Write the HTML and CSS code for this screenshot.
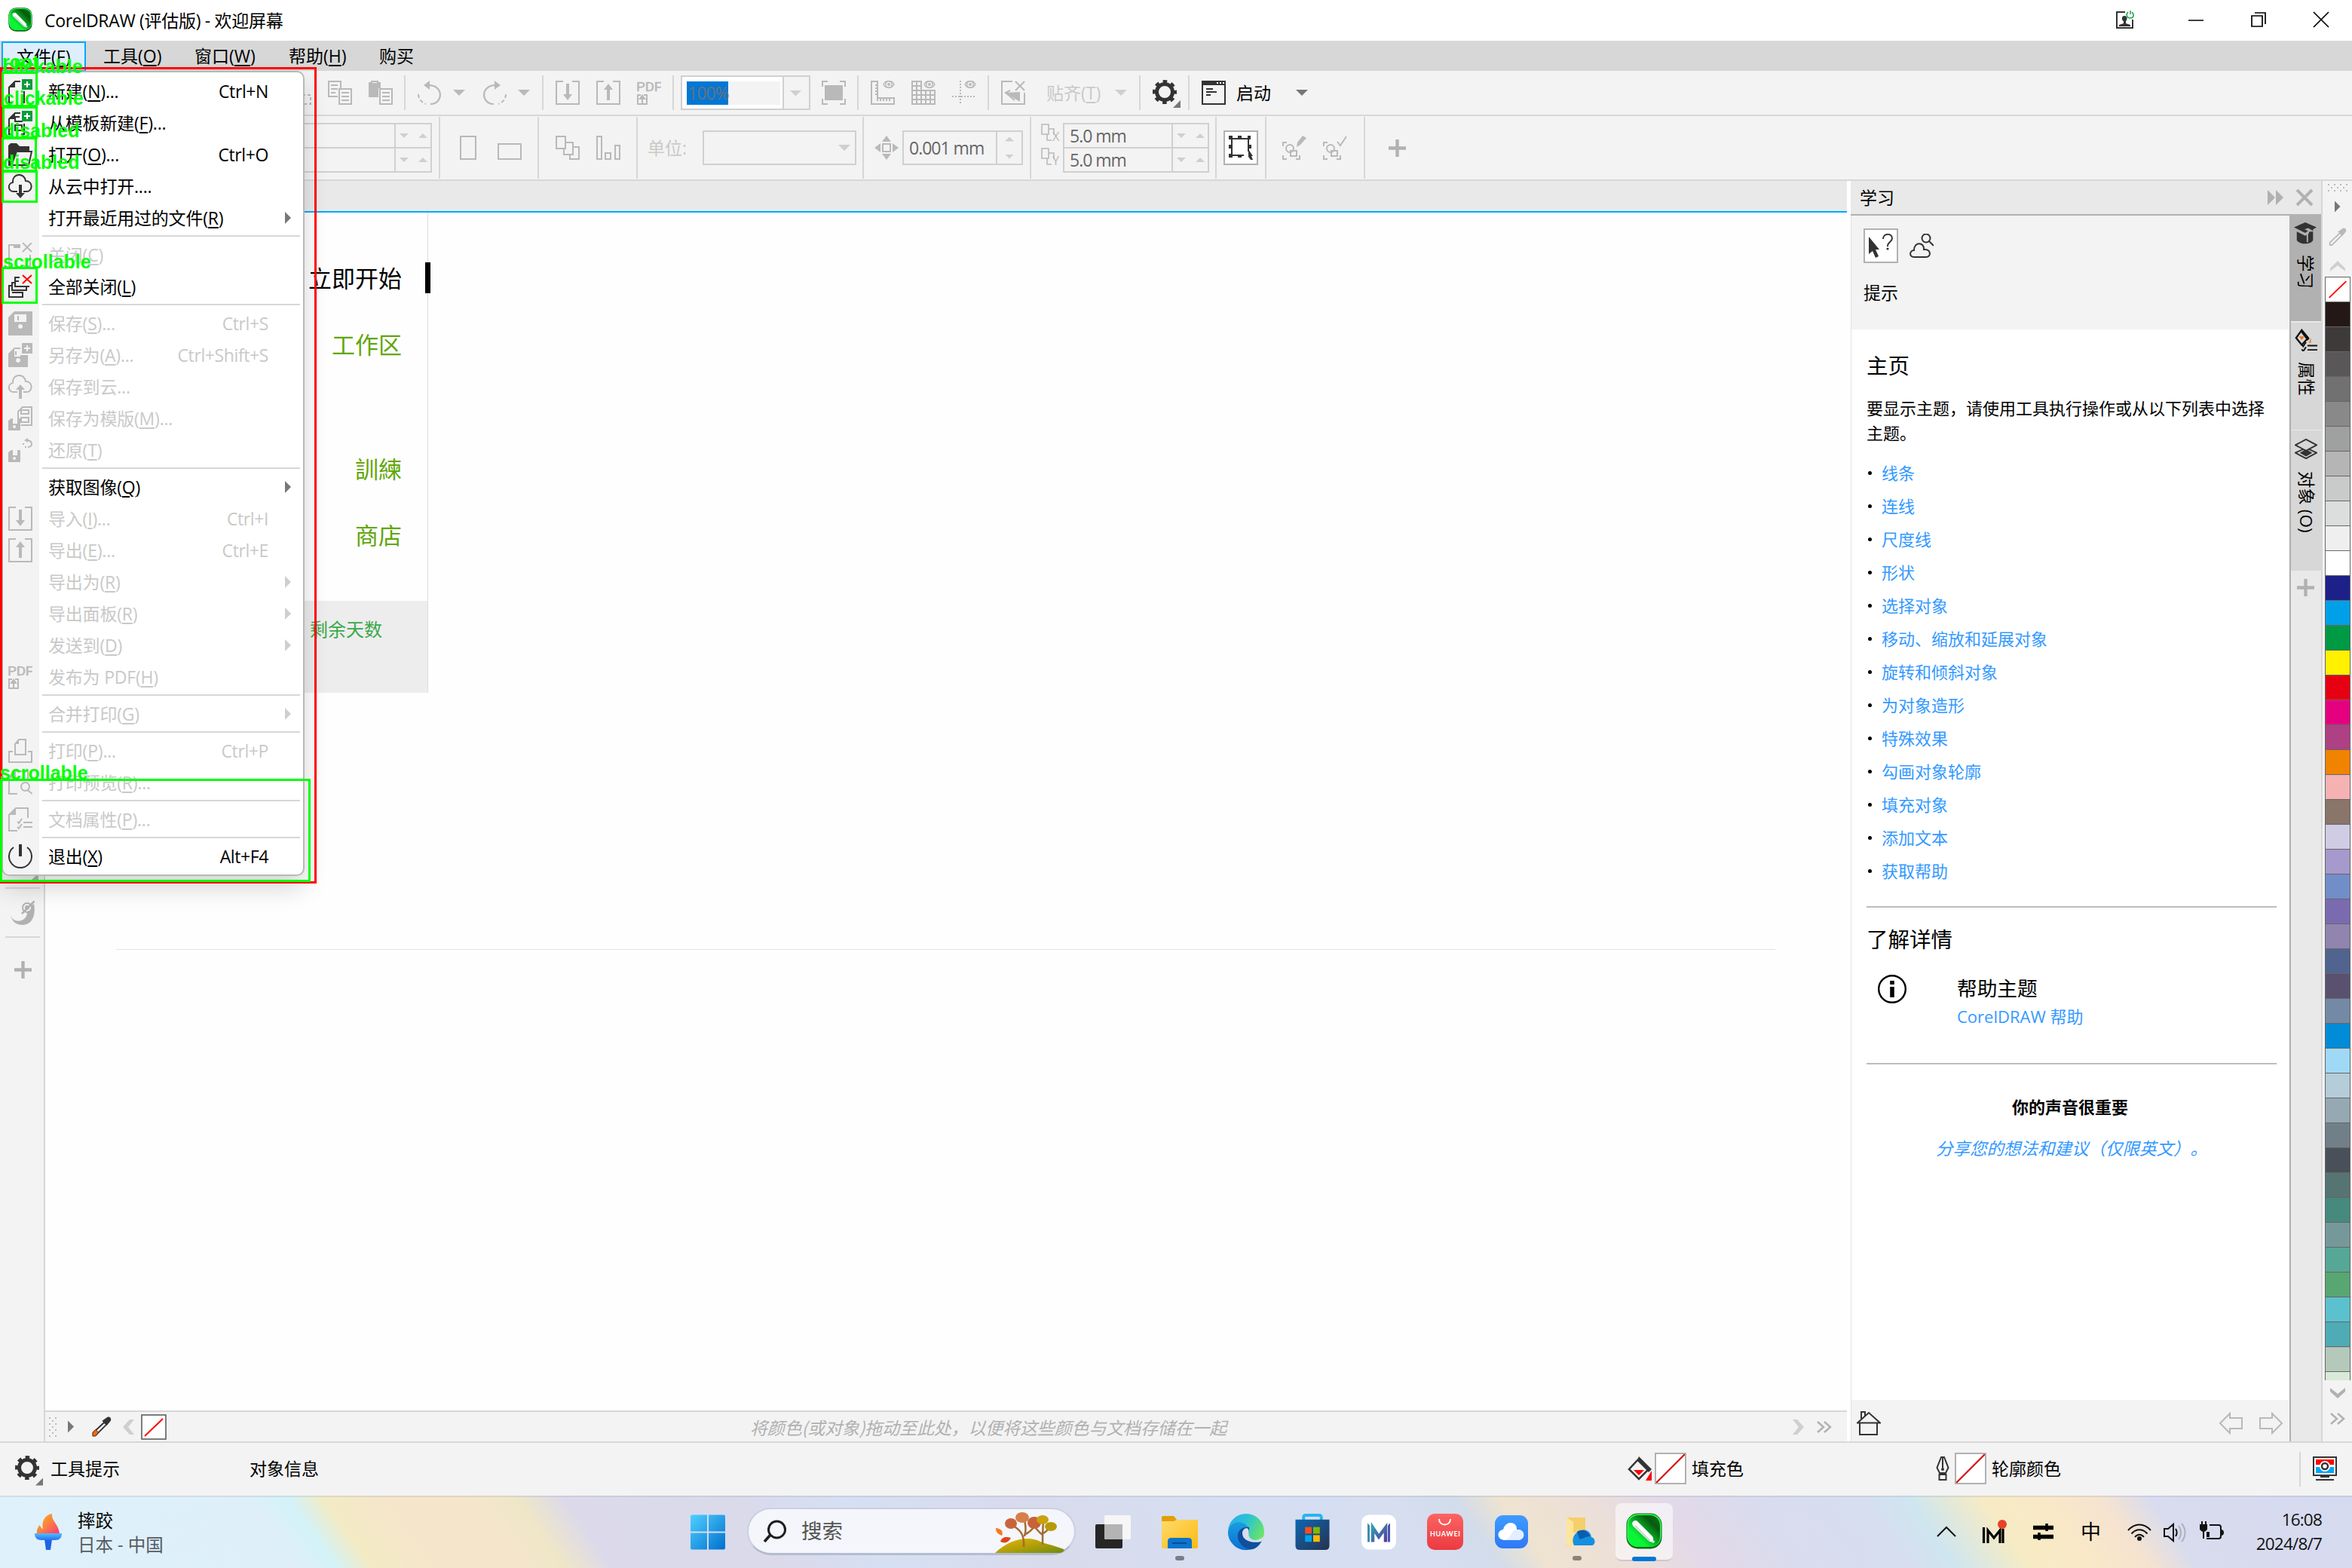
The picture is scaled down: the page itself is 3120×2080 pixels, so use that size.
FILE: index.html
```html
<!DOCTYPE html>
<html lang="zh-CN">
<head>
<meta charset="utf-8">
<title>CorelDRAW (评估版) - 欢迎屏幕</title>
<link rel="stylesheet" href="styles.css">
</head>
<body>
<svg class="defs" aria-hidden="true">
  <defs>
    <linearGradient id="gCorel" x1="0" y1="1" x2="1" y2="0"><stop offset=".3" stop-color="#0cf436"/><stop offset=".75" stop-color="#075a10"/><stop offset="1" stop-color="#0a7a18"/></linearGradient>
    <linearGradient id="gWin" x1="0" y1="0" x2="1" y2="1"><stop offset="0" stop-color="#4fd0ff"/><stop offset="1" stop-color="#0070cf"/></linearGradient>
    <linearGradient id="gFlame" x1="0" y1="0" x2="1" y2="1"><stop offset="0" stop-color="#f8b91c"/><stop offset=".5" stop-color="#fb8141"/><stop offset="1" stop-color="#f9387c"/></linearGradient>
    <linearGradient id="gTorch" x1="0" y1="0" x2="0" y2="1"><stop offset="0" stop-color="#55bdfb"/><stop offset="1" stop-color="#2272ee"/></linearGradient>
    <linearGradient id="gFolder" x1="0" y1="0" x2="1" y2="1"><stop offset="0" stop-color="#ffdb6b"/><stop offset="1" stop-color="#fbb912"/></linearGradient>
    <linearGradient id="gEdge" x1="0" y1="0" x2="1" y2=".5"><stop offset="0" stop-color="#2aa9f0"/><stop offset=".5" stop-color="#2bc3d2"/><stop offset="1" stop-color="#6be564"/></linearGradient>
    <linearGradient id="gEdge2" x1="0" y1="0" x2="0" y2="1"><stop offset="0" stop-color="#1b9de2"/><stop offset="1" stop-color="#0b6fd2"/></linearGradient>
    <linearGradient id="gStore" x1="0" y1="0" x2="1" y2="1"><stop offset="0" stop-color="#0d67b5"/><stop offset="1" stop-color="#27324e"/></linearGradient>
    <linearGradient id="gM" x1="0" y1="0" x2="1" y2="1"><stop offset="0" stop-color="#2f9ab0"/><stop offset="1" stop-color="#5a3aa4"/></linearGradient>
    <linearGradient id="gHw" x1="0" y1="0" x2="0" y2="1"><stop offset="0" stop-color="#fb6463"/><stop offset="1" stop-color="#ec3a41"/></linearGradient>
    <linearGradient id="gCloud" x1="0" y1="0" x2="0" y2="1"><stop offset="0" stop-color="#3e9bff"/><stop offset="1" stop-color="#2f79f6"/></linearGradient>
    <linearGradient id="gHill" x1="0" y1="0" x2="1" y2="1"><stop offset="0" stop-color="#f2b600"/><stop offset="1" stop-color="#6f8a12"/></linearGradient>

    <symbol id="corel" viewBox="0 0 48 48"><rect x=".5" y=".5" width="47" height="47" rx="15" fill="#0b6a1a"/><rect x="1.5" y="1.5" width="45" height="43.500" rx="14" fill="#2bff55"/><rect x="3" y="3" width="42" height="42" rx="13" fill="url(#gCorel)"/><path d="M8 14c1-4 5-5 7-3l20 20c2 3 1 6 0 7-2 1-4 0-6-2L9 17z" fill="#fff"/><path d="M12 17l20 20" stroke="#cfd3d6" stroke-width="2"/><circle cx="36" cy="38" r="1.800" fill="#e8e8e8"/></symbol>
    <symbol id="new" viewBox="0 0 32 32"><path d="M16 3H9L1 11v20h3M21 16v15h-4" fill="none" stroke="currentColor" stroke-width="2"/><path d="M9 2v9H0z" fill="currentColor"/><path d="M18 0h14v14H18z" fill="#0a9b3c"/><path d="M25 3v8M21 7h8" stroke="#fff" stroke-width="2"/></symbol>
    <symbol id="newtpl" viewBox="0 0 32 32"><path d="M16 3H9L1 11v20h3M15 8H9v6h10M9 19h9v7H9zM21 17v14h-4" fill="none" stroke="currentColor" stroke-width="2"/><path d="M9 2v9H0z" fill="currentColor"/><path d="M18 0h14v14H18z" fill="#0a9b3c"/><path d="M25 3v8M21 7h8" stroke="#fff" stroke-width="2"/></symbol>
    <symbol id="open" viewBox="0 0 32 32"><path d="M0 31V4l3-3h8l4 4h13v7H12L5 31z" fill="currentColor"/><path d="M12 12h19l-4 18H3" fill="none" stroke="currentColor" stroke-width="2"/></symbol>
    <symbol id="clouddn" viewBox="0 0 32 32"><path d="M12 23H7C-1 23-1 12 6 11 5-2 22-2 23 9c10 0 10 14 1 14h-4" fill="none" stroke="currentColor" stroke-width="2"/><path d="M14 14h4v11h4l-6 7-6-7h4z" fill="currentColor"/></symbol>
    <symbol id="cloudup" viewBox="0 0 32 32"><path d="M12 23H7C-1 23-1 12 6 11 5-2 22-2 23 9c10 0 10 14 1 14h-4" fill="none" stroke="currentColor" stroke-width="2"/><path d="M14 32h4V20h4l-6-7-6 7h4z" fill="currentColor"/></symbol>
    <symbol id="close" viewBox="0 0 32 32"><path d="M16 3H1v28h3M29 16v15h-9" fill="none" stroke="currentColor" stroke-width="2"/><path d="M7 3h9v4H7z" fill="currentColor"/><path d="M19 0l12 12M31 0L19 12" stroke="currentColor" stroke-width="2"/></symbol>
    <symbol id="closeall" viewBox="0 0 32 32"><path d="M15 4H9v12h19M14 9H9M9 11H5v10h19v-5M5 15H1v15h18v-6H5" fill="none" stroke="currentColor" stroke-width="2"/><path d="M19 1l12 11M31 1L19 12" stroke="#f00" stroke-width="2"/></symbol>
    <symbol id="save" viewBox="0 0 32 32"><path fill-rule="evenodd" d="M8 0h24v32H0V8zM8 4v10h16V4zM16 17a3 3 0 1 0 .1 0zM12 6h2v6h-2z" fill="currentColor"/></symbol>
    <symbol id="saveas" viewBox="0 0 32 32"><path fill-rule="evenodd" d="M8 6h8v2H8v10h8v-2h10v16H0V14zM13 20a3 3 0 1 0 .1 0zM18 0h14v14H18zM24 3v3h-3v2h3v3h2V8h3V6h-3V3zM9 11h2v5H9z" fill="currentColor"/></symbol>
    <symbol id="savetpl" viewBox="0 0 32 32"><path d="M13 16V7l6-6h12v24H17M17 5h10v5H17zM17 15h10v6H17z" fill="none" stroke="currentColor" stroke-width="2"/><path fill-rule="evenodd" d="M4 16h2v7h6v-7h4v16H0V19zM8 25a2 2 0 1 0 .1 0z" fill="currentColor"/></symbol>
    <symbol id="revert" viewBox="0 0 32 32"><path fill-rule="evenodd" d="M4 16h2v7h6v-7h4v16H0V19zM8 25a2 2 0 1 0 .1 0z" fill="currentColor"/><path d="M24 3c9 0 9 9 2 9" fill="none" stroke="currentColor" stroke-width="2"/><path d="M26 0v6l-5-3zM19 7h2v2h-2zM22 11h2v2h-2z" fill="currentColor"/></symbol>
    <symbol id="import" viewBox="0 0 32 32"><path d="M10 1H1v30h30V1h-9" fill="none" stroke="currentColor" stroke-width="2"/><path d="M14 4h4v14h4l-6 8-6-8h4z" fill="currentColor"/></symbol>
    <symbol id="export" viewBox="0 0 32 32"><path d="M10 1H1v30h30V1h-9" fill="none" stroke="currentColor" stroke-width="2"/><path d="M14 26h4V12h4l-6-8-6 8h4z" fill="currentColor"/></symbol>
    <symbol id="pdf" viewBox="0 0 32 32"><text x="-1" y="13.500" font-family="Roboto" font-size="16.500" textLength="34" lengthAdjust="spacingAndGlyphs" fill="currentColor" stroke="currentColor" stroke-width=".5">PDF</text><path d="M5 19H1v12h12V19H9M7 22v8" fill="none" stroke="currentColor" stroke-width="2"/><path d="M7 18l5 7H2z" fill="currentColor"/></symbol>
    <symbol id="print" viewBox="0 0 32 32"><path d="M9 21V7l5-6h9v20z M6 17H1v14h30V17h-5" fill="none" stroke="currentColor" stroke-width="2"/><path d="M14 1v6H8z" fill="currentColor"/></symbol>
    <symbol id="preview" viewBox="0 0 32 32"><path d="M12 31H1V9l8-8h17v10" fill="none" stroke="currentColor" stroke-width="2"/><circle cx="22.500" cy="21.500" r="5.500" fill="none" stroke="currentColor" stroke-width="2"/><path d="M9 1v8H1zM25.500 26l6 5" stroke="currentColor" stroke-width="2" fill="currentColor"/></symbol>
    <symbol id="props" viewBox="0 0 32 32"><path d="M12 31H1V10l9-9h16v13M20 20h12M20 26h12M12 19l2 2 4-6M12 26l2 2 4-6" fill="none" stroke="currentColor" stroke-width="2"/><path d="M10 1v9H1z" fill="currentColor"/></symbol>
    <symbol id="power" viewBox="0 0 32 32"><path d="M7 4a15 15 0 1 0 18 0" fill="none" stroke="currentColor" stroke-width="2"/><path d="M14 0h4v16h-4z" fill="currentColor"/></symbol>

    <symbol id="cut" viewBox="0 0 32 32"><path d="M2 2l14 18M20 19h11v12H18" fill="none" stroke="currentColor" stroke-width="2" stroke-dasharray="4 3"/></symbol>
    <symbol id="copy" viewBox="0 0 32 32"><path d="M13 21H1V1h16v9M4 6h9M4 11h9M4 16h6M15 11h16v20H15zM18 16h10M18 21h10M18 26h10" fill="none" stroke="currentColor" stroke-width="2"/></symbol>
    <symbol id="paste" viewBox="0 0 32 32"><path d="M0 2h3v3h10V2h3v8h-3v12H0z" fill="currentColor"/><path d="M4 1h8v3H4zM15 11h16v20H15zM18 16h10M18 21h10M18 26h10" fill="none" stroke="currentColor" stroke-width="2"/></symbol>
    <symbol id="undo" viewBox="0 0 32 32"><path d="M12 6c24-1 22 25 5 25" fill="none" stroke="currentColor" stroke-width="2.200"/><path d="M16 0v12L8 6z" fill="currentColor"/><path d="M1 18c0 6 4 11 10 13" fill="none" stroke="currentColor" stroke-width="2" stroke-dasharray="5 3"/></symbol>
    <symbol id="eye" viewBox="0 0 32 32"><circle cx="24" cy="5" r="4.300" fill="none" stroke="currentColor" stroke-width="1.500"/><path d="M17 5c3-6 11-6 14 0-3 6-11 6-14 0" fill="none" stroke="currentColor" stroke-width="1.500"/><circle cx="24" cy="5" r="2" fill="currentColor"/></symbol>
    <symbol id="ruler" viewBox="0 0 32 32"><path d="M1 1h8v22h22v8H1zM6 6h3M6 10h3M6 14h3M6 18h3M9 23v4M13 23v4M17 23v4M21 23v4M25 23v4" fill="none" stroke="currentColor" stroke-width="2"/><use href="#eye"/></symbol>
    <symbol id="grid" viewBox="0 0 32 32"><path d="M1 1h12v30H1zM7 1v30M1 7h12M1 13h30v18H1M1 19h30M1 25h30M19 13v18M25 13v18" fill="none" stroke="currentColor" stroke-width="2"/><use href="#eye"/></symbol>
    <symbol id="guides" viewBox="0 0 32 32"><path d="M11 0v32M0 21h32" stroke="currentColor" stroke-width="2" stroke-dasharray="2 2"/><use href="#eye"/></symbol>
    <symbol id="snap" viewBox="0 0 32 32"><path d="M15 1H1v30h30V16M19 1l12 12M31 1L19 13M12 13l-6 3 12 10" fill="none" stroke="currentColor" stroke-width="2"/><path d="M5 16l20-1v13z" fill="currentColor"/></symbol>
    <symbol id="full" viewBox="0 0 32 32"><path d="M4 6h24v20H4z" fill="currentColor"/><path d="M8 1H1v7M24 1h7v7M8 31H1v-7M24 31h7v-7" fill="none" stroke="currentColor" stroke-width="2"/></symbol>
    <symbol id="gear" viewBox="0 0 32 32"><circle cx="16" cy="16" r="10.500" fill="none" stroke="currentColor" stroke-width="5"/><circle cx="16" cy="16" r="14" fill="none" stroke="currentColor" stroke-width="4" stroke-dasharray="5.500 5.496" stroke-dashoffset="2.750"/></symbol>
    <symbol id="launch" viewBox="0 0 32 32"><path d="M1 1h30v30H1z" fill="none" stroke="currentColor" stroke-width="2"/><path d="M0 0h32v6H0zM6 10h9v2H6zM6 14h14v2H6zM6 18h6v2H6z" fill="currentColor"/><path d="M20 3h2M24 3h2M28 3h2" stroke="#fff" stroke-width="2"/></symbol>
    <symbol id="portrait" viewBox="0 0 22 32"><path d="M1 1h20v30H1z" fill="none" stroke="currentColor" stroke-width="2"/></symbol>
    <symbol id="landscape" viewBox="0 0 32 32"><path d="M1 11h30v20H1z" fill="none" stroke="currentColor" stroke-width="2"/></symbol>
    <symbol id="pages" viewBox="0 0 32 32"><path d="M1 1h12v16H1zM13 9h10v16H11v-8M23 15h8v16H19v-6" fill="none" stroke="currentColor" stroke-width="2"/></symbol>
    <symbol id="bars" viewBox="0 0 32 32"><path d="M1 1h6v30H1zM12 23h7v8h-7zM25 13h6v18h-6z" fill="none" stroke="currentColor" stroke-width="2"/></symbol>
    <symbol id="nudge" viewBox="0 0 32 32"><path d="M11 11h10v10H11z" fill="none" stroke="currentColor" stroke-width="2"/><path d="M16 0l6 8H10zM16 32l6-8H10zM0 16l8-6v12zM32 16l-8-6v12z" fill="currentColor"/></symbol>
    <symbol id="dup" viewBox="0 0 24 24"><path d="M1 1h9v13H1zM10 7h7v8M8 14v8h6" fill="none" stroke="currentColor" stroke-width="1.600"/></symbol>
    <symbol id="bbox" viewBox="0 0 32 32"><path d="M20 26H4V4h22v17" fill="none" stroke="currentColor" stroke-width="2"/><path d="M0 0h5v5H0zM12 0h5v4h-5zM25 0h4v5h-4zM0 12h4v5H0zM26 12h4v5h-4zM0 24h5v5H0zM12 25h5v4h-5zM26 18l6 9h-2l2 5h-3l-3-4z" fill="currentColor"/></symbol>
    <symbol id="shapeedit" viewBox="0 0 32 32"><path d="M6 9H1v5M1 26v5h5M18 31h5v-5M11 20h8v7h-8z" fill="none" stroke="currentColor" stroke-width="2"/><circle cx="10" cy="17" r="5" fill="none" stroke="currentColor" stroke-width="2"/><path d="M27 0l5 3-8 9-5 3 1-6z" fill="currentColor"/></symbol>
    <symbol id="shapeok" viewBox="0 0 32 32"><path d="M6 9H1v5M1 26v5h5M18 31h5v-5M11 20h8v7h-8zM19 8l4 5L31 1" fill="none" stroke="currentColor" stroke-width="2"/><circle cx="10" cy="17" r="5" fill="none" stroke="currentColor" stroke-width="2"/></symbol>
    <symbol id="plus" viewBox="0 0 24 24"><path d="M12 0v24M0 12h24" stroke="currentColor" stroke-width="4.500"/></symbol>
    <symbol id="swirl" viewBox="0 0 32 32"><path d="M0 19c3 11 20 10 22-2 0-4-2-5-5-5L31 4c3 14-2 28-15 28C8 32 2 28 0 19z" fill="currentColor"/><circle cx="22" cy="9" r="6" fill="#f3f3f3" stroke="currentColor" stroke-width="2"/><path d="M15 17L32 0" stroke="currentColor" stroke-width="2.500"/><circle cx="22" cy="9" r="3" fill="currentColor"/></symbol>
    <symbol id="whatsthis" viewBox="0 0 32 32"><path d="M0 4l14 17H9l4 9-4 2-4-9-5 4z" fill="currentColor"/><path d="M19 7c0-8 12-8 12-1 0 5-6 5-6 10v1" fill="none" stroke="currentColor" stroke-width="2"/><circle cx="25" cy="20" r="1.600" fill="currentColor"/></symbol>
    <symbol id="cloudfind" viewBox="0 0 32 32"><path d="M6 31c-7 0-6-9 0-9 0-12 14-11 13-1 10-1 10 10 3 10z" fill="none" stroke="currentColor" stroke-width="2"/><circle cx="22" cy="6" r="5.500" fill="none" stroke="currentColor" stroke-width="2"/><path d="M26 10l6 6" stroke="currentColor" stroke-width="2"/></symbol>
    <symbol id="home" viewBox="0 0 32 32"><path d="M4 16v15h23V16M1 15.500h30L16 2zM6 10V1h5v5" fill="none" stroke="currentColor" stroke-width="2"/></symbol>
    <symbol id="arrow" viewBox="0 0 32 32"><path d="M2 16L15 3v6h16v14H15v6z" fill="none" stroke="currentColor" stroke-width="2"/></symbol>
    <symbol id="hat" viewBox="0 0 32 32"><path d="M16 1l16 7-5 3v2l-7-4-5 2 5 2-4 3L0 8zM4 14l12 6 2-1v10h2V18l2-4h5v12c-3 7-20 7-23 0z" fill="currentColor"/></symbol>
    <symbol id="fillprops" viewBox="0 0 32 32"><path d="M10 2l9 11-9 10L2 13z" fill="none" stroke="#111" stroke-width="2.500"/><path d="M10 1l11 13-3 3L8 4z" fill="#111"/><path d="M6 11h8l-4 5zM23 13v7h-3z" fill="#f4731c"/><path d="M18 24h14M18 30h14M10 22l2 3 4-6M10 29l2 3 4-6" fill="none" stroke="#111" stroke-width="2"/></symbol>
    <symbol id="layers" viewBox="0 0 32 32"><path d="M16 14l15 7-15 8L1 21z" fill="none" stroke="currentColor" stroke-width="2"/><path d="M16 16l9 5-9 5-9-5z" fill="currentColor"/><path d="M16 2l15 8-15 8L1 10z" fill="#d7d7d7" stroke="currentColor" stroke-width="2"/></symbol>
    <symbol id="dropper" viewBox="0 0 28 28"><path d="M18 8L3 22v4h3L20 12" fill="none" stroke="currentColor" stroke-width="2"/><path d="M15 6l7-5c4-2 7 3 4 6l-5 6z" fill="currentColor"/></symbol>
    <symbol id="bucket" viewBox="0 0 32 32"><path d="M15 3l13 14-13 13L2 17z" fill="none" stroke="#333" stroke-width="2.500"/><path d="M15 0l17 17-4 4L13 6z" fill="#333"/><path d="M8 18h14l-7 7zM32 19v13h-8z" fill="#f00"/></symbol>
    <symbol id="pen" viewBox="0 0 18 32"><path d="M7 1L1.500 15 5 22h8l3.500-7L11 1zM4.500 24h9v7h-9zM9 1v14" fill="none" stroke="#333" stroke-width="2"/><circle cx="9" cy="17" r="2" fill="#333"/></symbol>
    <symbol id="monitor" viewBox="0 0 32 32"><path d="M1 1h30v24H1z" fill="#fff" stroke="#333" stroke-width="2"/><path d="M4 4h24v7H4z" fill="#f00"/><path d="M4 14h24v8H4z" fill="#00a8f5"/><circle cx="16" cy="13" r="7" fill="#fff"/><circle cx="16" cy="13" r="4" fill="#fff" stroke="#333" stroke-width="2.500"/><path d="M10 26h12v2H10zM4 30h24v2H4z" fill="#333"/></symbol>
    <symbol id="chev" viewBox="0 0 16 20"><path d="M0 0h6l9 10-9 10H0l8-10z" fill="currentColor"/></symbol>
    <symbol id="dchev" viewBox="0 0 20 16"><path d="M1 1l8 7-8 7M10 1l8 7-8 7" fill="none" stroke="currentColor" stroke-width="2.500"/></symbol>
  </defs>
</svg>

<header class="titlebar">
  <svg class="i32"><use href="#corel"/></svg>
  <h1>CorelDRAW (评估版) - 欢迎屏幕</h1>
  <svg class="win-user" viewBox="0 0 24 24"><path d="M12 2H1v21h21V12" fill="none" stroke="#333" stroke-width="2"/><path d="M11 7c5 0 4 6 2 7v3l6 2v2H4v-2l6-2v-3C7 13 7 7 11 7z" fill="#333"/><path d="M16 2c-4 4-1 8 3 8s6-4 2-8M19 0v5" fill="none" stroke="#17a54b" stroke-width="1.500"/></svg>
  <svg class="win-min" viewBox="0 0 20 20"><path d="M0 11h20" stroke="#000" stroke-width="1.500"/></svg>
  <svg class="win-max" viewBox="0 0 20 20"><path d="M1 5h14v14H1zM5 1h14v15" fill="none" stroke="#000" stroke-width="1.700"/></svg>
  <svg class="win-x" viewBox="0 0 20 20"><path d="M0 0l20 20M20 0L0 20" stroke="#000" stroke-width="1.700"/></svg>
</header>

<nav class="menubar">
  <span class="active">文件(<u>F</u>)</span><span>工具(<u>O</u>)</span><span>窗口(<u>W</u>)</span><span>帮助(<u>H</u>)</span><span>购买</span>
</nav>

<div class="bar standard">
  <svg class="i32"><use href="#cut"/></svg>
  <svg class="i32"><use href="#copy"/></svg>
  <svg class="i32"><use href="#paste"/></svg>
  <i class="sep"></i>
  <svg class="i32"><use href="#undo"/></svg>
  <i class="tri dim"></i>
  <svg class="i32 flip"><use href="#undo"/></svg>
  <i class="tri dim"></i>
  <i class="sep"></i>
  <svg class="i32"><use href="#import"/></svg>
  <svg class="i32"><use href="#export"/></svg>
  <svg class="i32"><use href="#pdf"/></svg>
  <i class="sep"></i>
  <div class="zoombox"><span><b>100%</b></span><i class="tri pale"></i></div>
  <svg class="i32"><use href="#full"/></svg>
  <i class="sep"></i>
  <svg class="i32"><use href="#ruler"/></svg>
  <svg class="i32"><use href="#grid"/></svg>
  <svg class="i32"><use href="#guides"/></svg>
  <i class="sep"></i>
  <svg class="i32"><use href="#snap"/></svg>
  <span class="off">贴齐(<u>T</u>)</span>
  <i class="tri pale"></i>
  <i class="sep"></i>
  <span class="gearbtn"><svg class="i32"><use href="#gear"/></svg></span>
  <i class="sep"></i>
  <svg class="i32 dark"><use href="#launch"/></svg>
  <span>启动</span>
  <i class="tri mid"></i>
</div>

<div class="bar property">
  <div class="pair size"><div><span></span><i class="tri s pale"></i><i class="tri s up pale"></i></div><div><span></span><i class="tri s pale"></i><i class="tri s up pale"></i></div></div>
  <i class="sep"></i>
  <svg class="portrait"><use href="#portrait"/></svg>
  <svg class="i32"><use href="#landscape"/></svg>
  <i class="sep"></i>
  <svg class="i32"><use href="#pages"/></svg>
  <svg class="i32"><use href="#bars"/></svg>
  <i class="sep"></i>
  <span class="off">单位:</span>
  <div class="unit"><i class="tri pale"></i></div>
  <i class="sep"></i>
  <svg class="i32"><use href="#nudge"/></svg>
  <div class="nudge"><span>0.001 mm</span><em><i class="tri s up pale"></i><i class="tri s pale"></i></em></div>
  <i class="sep"></i>
  <div class="dups"><span><svg><use href="#dup"/></svg><b>X</b></span><span><svg><use href="#dup"/></svg><b>Y</b></span></div>
  <div class="pair"><div><span>5.0 mm</span><i class="tri s pale"></i><i class="tri s up pale"></i></div><div><span>5.0 mm</span><i class="tri s pale"></i><i class="tri s up pale"></i></div></div>
  <i class="sep"></i>
  <div class="toggle"><svg class="i32"><use href="#bbox"/></svg></div>
  <i class="sep"></i>
  <svg class="i32"><use href="#shapeedit"/></svg>
  <svg class="i32"><use href="#shapeok"/></svg>
  <i class="sep"></i>
  <svg class="plus"><use href="#plus"/></svg>
</div>

<main class="workspace">
  <aside class="toolbox">
    <i class="corner"></i><hr>
    <svg class="i32"><use href="#swirl"/></svg><hr>
    <svg class="plus"><use href="#plus"/></svg>
  </aside>

  <section class="document">
    <div class="doctabs"></div>
    <div class="page">
      <div class="welcome">
        <ul><li class="on">立即开始</li><li>工作区</li><li class="gap">訓練</li><li>商店</li></ul>
        <p>剩余天数</p>
      </div>
      <hr>
    </div>
    <div class="docpalette">
      <i class="grip"></i><i class="tri right mid"></i>
      <svg class="drop" viewBox="0 0 28 28"><use href="#dropper"/><path d="M2 22l4-4 4 4-4 5H2z" fill="#f60" stroke="#333"/></svg>
      <svg class="chev flip pale"><use href="#chev"/></svg>
      <svg class="none" viewBox="0 0 34 34"><path d="M1 1h32v32H1z" fill="#fff" stroke="#555" stroke-width="1.500"/><path d="M5 29L29 6" stroke="#f00" stroke-width="2"/></svg>
      <em>将颜色(或对象)拖动至此处，以便将这些颜色与文档存储在一起</em>
      <svg class="chev pale"><use href="#chev"/></svg>
      <svg class="dchev"><use href="#dchev"/></svg>
    </div>
  </section>

  <section class="docker">
    <header><h2>学习</h2><svg class="ff" viewBox="0 0 21 20"><path d="M0 0l10 10L0 20zM11 0l10 10-10 10z" fill="#b1b1b1"/></svg><svg class="xx" viewBox="0 0 22 20"><path d="M1 0l20 20M21 0L1 20" stroke="#b1b1b1" stroke-width="4"/></svg></header>
    <div class="learn">
      <div class="hints">
        <div class="row"><span class="toggle"><svg class="i32"><use href="#whatsthis"/></svg></span><svg class="i32 dark"><use href="#cloudfind"/></svg></div>
        <h3>提示</h3>
      </div>
      <article>
        <h4>主页</h4>
        <p class="intro">要显示主题，请使用工具执行操作或从以下列表中选择主题。</p>
        <ul>
          <li><a>线条</a></li><li><a>连线</a></li><li><a>尺度线</a></li><li><a>形状</a></li><li><a>选择对象</a></li><li><a>移动、缩放和延展对象</a></li><li><a>旋转和倾斜对象</a></li><li><a>为对象造形</a></li><li><a>特殊效果</a></li><li><a>勾画对象轮廓</a></li><li><a>填充对象</a></li><li><a>添加文本</a></li><li><a>获取帮助</a></li>
        </ul>
        <div class="more">
          <h4>了解详情</h4>
          <div class="topic">
            <svg viewBox="0 0 38 38"><circle cx="19" cy="19" r="17.800" fill="none" stroke="#000" stroke-width="2.400"/><path d="M16.200 8h5.600v5h-5.600zM16.200 16h5.600v14h-5.600z"/></svg>
            <div><strong>帮助主题</strong><a>CorelDRAW 帮助</a></div>
          </div>
        </div>
        <p class="voice">你的声音很重要</p>
        <p class="share"><a>分享您的想法和建议（仅限英文）。</a></p>
      </article>
      <footer><svg class="i32 dark"><use href="#home"/></svg><svg class="i32"><use href="#arrow"/></svg><svg class="i32 flip"><use href="#arrow"/></svg></footer>
    </div>
    <nav class="tabs">
      <span class="sel"><svg><use href="#hat"/></svg>学习</span>
      <span><svg><use href="#fillprops"/></svg>属性</span>
      <span class="obj"><svg><use href="#layers"/></svg>对象 (O)</span>
      <svg class="plus"><use href="#plus"/></svg>
    </nav>
  </section>

  <aside class="palette">
    <i class="grip wide"></i><i class="tri right mid"></i>
    <svg class="drop"><use href="#dropper"/></svg>
    <svg class="up pale" viewBox="0 0 20 14"><path d="M0 10L10 0l10 10v4L10 6 0 14z" fill="currentColor"/></svg>
    <div class="swatches">
      <svg viewBox="0 0 34 33"><path d="M0 0h34v33H0z" fill="#fff"/><path d="M5 28L29 5" stroke="#f00" stroke-width="2"/></svg>
      <i style="background:#231815"></i><i style="background:#3e3a39"></i><i style="background:#595757"></i><i style="background:#727171"></i><i style="background:#898989"></i><i style="background:#9fa0a0"></i><i style="background:#b5b5b6"></i><i style="background:#c9caca"></i><i style="background:#dcdddd"></i><i style="background:#efefef"></i><i style="background:#fff"></i><i style="background:#1d2088"></i><i style="background:#00a0e9"></i><i style="background:#009944"></i><i style="background:#fff100"></i><i style="background:#e60012"></i><i style="background:#e4007f"></i><i style="background:#ae4084"></i><i style="background:#f08300"></i><i style="background:#f4b2b3"></i><i style="background:#89756a"></i><i style="background:#d0cce4"></i><i style="background:#a699cb"></i><i style="background:#728ec8"></i><i style="background:#7a6bb0"></i><i style="background:#9184ae"></i><i style="background:#50648f"></i><i style="background:#5a516e"></i><i style="background:#7489a5"></i><i style="background:#008cd6"></i><i style="background:#9fd9f6"></i><i style="background:#b5ccd9"></i><i style="background:#96a8b2"></i><i style="background:#717f88"></i><i style="background:#495059"></i><i style="background:#557472"></i><i style="background:#458a7c"></i><i style="background:#75999a"></i><i style="background:#56a796"></i><i style="background:#58a671"></i><i style="background:#5bc1cf"></i><i style="background:#4fabb5"></i><i style="background:#b5c9ba"></i><i style="background:#d8ead7"></i>
    </div>
    <svg class="down" viewBox="0 0 20 14"><path d="M0 0l10 8L20 0v5l-10 9L0 5z" fill="#b1b1b1"/></svg>
    <svg class="dchev"><use href="#dchev"/></svg>
  </aside>
</main>

<footer class="status">
  <span class="gearbtn"><svg class="i32"><use href="#gear"/></svg></span>
  <span>工具提示</span><span>对象信息</span>
  <svg class="i32"><use href="#bucket"/></svg>
  <i class="nofill"></i><span>填充色</span>
  <svg class="pen"><use href="#pen"/></svg>
  <i class="nofill"></i><span>轮廓颜色</span>
  <i class="sep"></i>
  <svg class="i32"><use href="#monitor"/></svg>
</footer>

<footer class="taskbar">
  <svg class="torch" viewBox="0 0 36 48"><path d="M3 27C2 20 5 19 6 15c3 2 2 5 5 5C9 12 12 2 23 0c-1 10 9 13 10 27z" fill="url(#gFlame)"/><path d="M13 34h10l-2 14h-6z" fill="#1e62e4"/><path d="M0 26h36c0 6-3 9-9 9H9c-6 0-9-3-9-9z" fill="url(#gTorch)"/></svg>
  <div class="news"><b>摔跤</b><span>日本 - 中国</span></div>
  <svg class="i46" viewBox="0 0 46 46"><path d="M0 2q0-2 2-2h20v22H0zM24 0h20q2 0 2 2v20H24zM0 24h22v22H2q-2 0-2-2zM24 24h22v20q0 2-2 2H24z" fill="url(#gWin)"/></svg>
  <div class="search">
    <svg viewBox="0 0 30 30"><circle cx="17.500" cy="13" r="11" fill="none" stroke="#1d1d1d" stroke-width="3"/><path d="M9 20l-8 9" stroke="#1d1d1d" stroke-width="3.500"/></svg>
    <span>搜索</span>
    <svg class="trees" viewBox="0 0 92 54"><path d="M0 54C20 35 45 30 62 40c14 4 22 6 29 9 2 2-2 5-6 5z" fill="url(#gHill)"/><path d="M38 46c1-16-4-22-14-28M39 32c2-8 2-12 0-22M39 30c8-4 12-8 16-16M63 43c0-12 0-18 1-30M63 30c-5-4-8-6-12-14M64 28c6-4 8-6 10-10" fill="none" stroke="#a36b33" stroke-width="2.500"/><ellipse cx="21" cy="15" rx="8" ry="7" fill="#c9653c"/><ellipse cx="36" cy="7" rx="9" ry="7" fill="#d77f4a"/><ellipse cx="52" cy="14" rx="9" ry="8" fill="#c8623a"/><ellipse cx="63" cy="10" rx="8" ry="6" fill="#c9a20c"/><ellipse cx="74" cy="19" rx="8" ry="6" fill="#b99908"/><path d="M1 21c8 1 10 5 8 10-6-2-8-5-8-10z" fill="#f47b20"/><path d="M7 39c2-6 7-7 14-5-3 6-8 8-14 5z" fill="#e0431a"/></svg>
  </div>
  <svg class="i48" viewBox="0 0 48 48"><rect y="14" width="36" height="32" rx="2" fill="#262626"/><rect x="12" y="2" width="35" height="32" rx="2" fill="#f6f6f6"/><path d="M12 14h24v20H14q-2 0-2-2z" fill="#b4b4b4"/></svg>
  <span class="app run"><svg class="i48" viewBox="0 0 48 48"><path d="M0 5q0-2 2-2h14l4 5h26q2 0 2 2v6H0z" fill="#e0a008"/><path d="M0 10h16l4-2h28v36q0 2-2 2H2q-2 0-2-2z" fill="url(#gFolder)"/><path d="M8 46V36q0-4 5-4h22q5 0 5 4v10z" fill="#0c74cc"/><path d="M14 39h19" stroke="#074f93" stroke-width="2"/></svg></span>
  <svg class="i48" viewBox="0 0 48 48"><circle cx="24" cy="24" r="24" fill="url(#gEdge)"/><path d="M0 24C3 8 22 8 27 19c-9-2-12 10-6 17 5 6 15 6 23 1-8 13-27 15-37 4C2 36 0 30 0 24z" fill="url(#gEdge2)"/><path d="M28 18c-14-2-19 12-12 21 5 7 13 9 17 8 6-2 9-6 12-11-13 4-23-2-17-12z" fill="#104f9c"/><path d="M25 19c5 3 1 7 3 11 4 9 17 4 20-1-1 4-3 7-4 8-13 3-25-2-25-11 0-4 3-7 6-7z" fill="#d6def0"/></svg>
  <svg class="i46" viewBox="0 0 46 48"><path d="M11 10V4q0-3 3-3h18q3 0 3 3v6" fill="none" stroke="#25b6f4" stroke-width="4"/><path d="M0 7h46v35q0 6-6 6H6q-6 0-6-6z" fill="url(#gStore)"/><path d="M13 17h9v9h-9z" fill="#f25022"/><path d="M24 17h9v9h-9z" fill="#7fba00"/><path d="M13 28h9v9h-9z" fill="#00a4ef"/><path d="M24 28h9v9h-9z" fill="#ffb900"/></svg>
  <svg class="i46" viewBox="0 0 46 46"><rect width="46" height="46" rx="10" fill="#fff"/><path d="M8 11l3 3v22H8z" fill="#3a8fae"/><path d="M15 36V17l8 12 9-12v19" fill="none" stroke="url(#gM)" stroke-width="4.500"/><path d="M38 11l-3 3v22h3z" fill="#4a55a8"/></svg>
  <svg class="i48" viewBox="0 0 48 48"><rect width="48" height="48" rx="10" fill="url(#gHw)"/><path d="M16 7c0 10 15 10 15 0" fill="none" stroke="#fff" stroke-width="1.800"/><text x="4" y="30" font-family="Lato" font-weight="700" font-size="9" textLength="40" fill="#fff">HUAWEI</text></svg>
  <svg class="i44" viewBox="0 0 44 44"><rect width="44" height="44" rx="11" fill="url(#gCloud)"/><path d="M13 33C2 33 2 20 11 19 14 6 30 8 29 19c12-1 12 14 2 14z" fill="#fff"/><path d="M13 33c8-1 9-14 16-14 12-1 12 14 2 14z" fill="#e3eeff"/></svg>
  <span class="app run warm"><svg class="i48" viewBox="0 0 48 48"><path d="M10 5h25v20H18l-4 18-4-1z" fill="#f5cf6b"/><path d="M10 5l9 6v35L10 41z" fill="#ffe59c"/><path d="M20 42c-4-8 0-16 7-19 8-4 15 0 16 8 6 1 6 11 0 11z" fill="#1490df"/><path d="M24 24c7-5 15-1 17 6-7 0-10 5-14 3z" fill="#0a5cb0"/></svg></span>
  <span class="app tile"><svg class="i48"><use href="#corel"/></svg></span>
  <svg class="caret" viewBox="0 0 26 14"><path d="M1 13L13 1l12 12" fill="none" stroke="#111" stroke-width="2"/></svg>
  <svg class="i32" viewBox="0 0 32 32"><path d="M1.500 31V10M7 31V14l8 10 8-10v17M27 31V12" fill="none" stroke="#000" stroke-width="3.200"/><circle cx="26" cy="6" r="6" fill="#e8402a"/></svg>
  <svg class="slid" viewBox="0 0 27 24"><path d="M0 6.500h27M0 18.500h27" stroke="#000" stroke-width="5.500"/><path d="M18 1v10M8 13v10" stroke="#000" stroke-width="3.500"/></svg>
  <span class="ime">中</span>
  <svg class="i32" viewBox="0 0 32 32"><path d="M1 14c9-10 21-10 30 0M5.500 18.500c6-7 15-7 21 0M10 23c3.500-4.500 8.500-4.500 12 0" fill="none" stroke="#111" stroke-width="2"/><circle cx="16" cy="25" r="3" fill="#111"/></svg>
  <svg class="i32" viewBox="0 0 32 32"><path d="M1 12h5l7-6v22l-7-6H1z M16 12c2 3 2 7 0 10" fill="none" stroke="#111" stroke-width="2"/><path d="M20 8c4 5 4 13 0 18M24 5c6 7 6 17 0 24" fill="none" stroke="#aab2c2" stroke-width="2"/></svg>
  <svg class="i32" viewBox="0 0 32 32"><path d="M13 7h12q3 0 3 3v12q0 3-3 3H9" fill="none" stroke="#111" stroke-width="2"/><path d="M0 6h2V2h2v4h3V2h2v4h1v6q0 2-4 4v9H4v-9q-4-2-4-4zM28 13q4 0 4 4t-4 4zM9 16h4v7H9z" fill="#111"/></svg>
  <div class="clock"><span>16:08</span><span>2024/8/7</span></div>
</footer>

<ul class="filemenu">
  <li class="first"><svg><use href="#new"/></svg><span>新建(<u>N</u>)...</span><kbd>Ctrl+N</kbd></li>
  <li><svg><use href="#newtpl"/></svg><span>从模板新建(<u>F</u>)...</span></li>
  <li><svg><use href="#open"/></svg><span>打开(<u>O</u>)...</span><kbd>Ctrl+O</kbd></li>
  <li><svg><use href="#clouddn"/></svg><span>从云中打开....</span></li>
  <li class="sub"><svg></svg><span>打开最近用过的文件(<u>R</u>)</span></li>
  <li class="line"></li>
  <li class="off"><svg><use href="#close"/></svg><span>关闭(<u>C</u>)</span></li>
  <li><svg><use href="#closeall"/></svg><span>全部关闭(<u>L</u>)</span></li>
  <li class="line"></li>
  <li class="off"><svg><use href="#save"/></svg><span>保存(<u>S</u>)...</span><kbd>Ctrl+S</kbd></li>
  <li class="off"><svg><use href="#saveas"/></svg><span>另存为(<u>A</u>)...</span><kbd>Ctrl+Shift+S</kbd></li>
  <li class="off"><svg><use href="#cloudup"/></svg><span>保存到云...</span></li>
  <li class="off"><svg><use href="#savetpl"/></svg><span>保存为模版(<u>M</u>)...</span></li>
  <li class="off"><svg><use href="#revert"/></svg><span>还原(<u>T</u>)</span></li>
  <li class="line"></li>
  <li class="sub"><svg></svg><span>获取图像(<u>Q</u>)</span></li>
  <li class="off"><svg><use href="#import"/></svg><span>导入(<u>I</u>)...</span><kbd>Ctrl+I</kbd></li>
  <li class="off"><svg><use href="#export"/></svg><span>导出(<u>E</u>)...</span><kbd>Ctrl+E</kbd></li>
  <li class="off sub"><svg></svg><span>导出为(<u>R</u>)</span></li>
  <li class="off sub"><svg></svg><span>导出面板(<u>R</u>)</span></li>
  <li class="off sub"><svg></svg><span>发送到(<u>D</u>)</span></li>
  <li class="off"><svg><use href="#pdf"/></svg><span>发布为 PDF(<u>H</u>)</span></li>
  <li class="line"></li>
  <li class="off sub"><svg></svg><span>合并打印(<u>G</u>)</span></li>
  <li class="line"></li>
  <li class="off"><svg><use href="#print"/></svg><span>打印(<u>P</u>)...</span><kbd>Ctrl+P</kbd></li>
  <li class="off"><svg><use href="#preview"/></svg><span>打印预览(<u>R</u>)...</span></li>
  <li class="line"></li>
  <li class="off"><svg><use href="#props"/></svg><span>文档属性(<u>P</u>)...</span></li>
  <li class="line"></li>
  <li><svg><use href="#power"/></svg><span>退出(<u>X</u>)</span><kbd>Alt+F4</kbd></li>
</ul>

<div class="mark root"><b>root</b></div>
<div class="mark m1"><b>clickable</b></div>
<div class="mark m2"><b>clickable</b></div>
<div class="mark m3"><b>disabled</b></div>
<div class="mark m4"><b>disabled</b></div>
<div class="mark m5"><b>scrollable</b></div>
<div class="mark m6"><b>scrollable</b></div>
</body>
</html>
```
FILE: styles.css
```css
* { box-sizing: border-box; margin: 0; padding: 0; }
html, body { width: 3120px; height: 2080px; overflow: hidden; }
body {
  position: relative;
  display: flex;
  flex-direction: column;
  background: #f3f3f3;
  color: #000;
  font: 23px/30px "Open Sans", "Noto Sans CJK SC", sans-serif;
  white-space: nowrap;
}
ul { list-style: none; }
svg { display: block; flex: none; overflow: visible; }
i, em { font-style: normal; }
h1, h2, h3, h4, kbd { font: inherit; }
u { text-underline-offset: 3px; text-decoration-thickness: 2px; }
.defs { position: absolute; width: 0; height: 0; }
.i32 { width: 32px; height: 32px; }
.i44 { width: 44px; height: 44px; }
.i46 { width: 46px; height: 47px; }
.i48 { width: 48px; height: 48px; }
.flip { transform: scaleX(-1); }
.dark { color: #333; }
.off { color: #c9c9c9; }
.pale { color: #cfcfcf; }
.dim { color: #b9b9b9; }
.mid { color: #777; }

/* triangles */
.tri { width: 16px; height: 8px; background: currentColor; clip-path: polygon(0 0, 100% 0, 50% 100%); }
.tri.s { width: 12px; height: 6px; }
.tri.up { clip-path: polygon(0 100%, 100% 100%, 50% 0); }
.tri.right { width: 8px; height: 16px; clip-path: polygon(0 0, 100% 50%, 0 100%); }

/* title and menu bar */
.titlebar { height: 54px; background: #fff; display: flex; align-items: center; padding: 0 31px 2px 11px; }
.titlebar h1 { margin-left: 16px; margin-right: auto; letter-spacing: -.3px; padding-top: 2px; }
.win-user { width: 24px; height: 24px; margin-right: 72px; }
.win-min { width: 20px; height: 20px; margin-right: 63px; }
.win-max { width: 20px; height: 20px; margin-right: 63px; }
.win-x { width: 20px; height: 20px; }
.menubar {
  height: 40px; background: #d7d7d7;
  display: grid; grid-template-columns: 115px 121px 125px 120px 100px;
  padding: 1px 0 0 2px; line-height: 39px;
}
.menubar span { padding-left: 20px; }
.menubar .active { width: 112px; padding-left: 18px; background: #dfeefd; border: 2px solid #0af; line-height: 36px; }

/* toolbars: columns run from one control's left edge to the next */
.bar { display: grid; align-items: center; border-bottom: 2px solid #d7d7d7; color: #b9b9b9; }
.bar span { color: #000; }
.bar span.off { color: #c9c9c9; }
.sep { width: 2px; height: 46px; background: #d7d7d7; }
.standard {
  height: 60px; padding-left: 381px;
  grid-template-columns: 54px 54px 47px 18px 47px 39px 47px 32px 18px 54px 54px 47px 11px 187px 47px 18px 54px 54px 47px 18px 60px 91px 32px 18px 47px 18px 46px 79px 20px;
}
.zoombox { width: 172px; height: 46px; border: 2px solid #d0d0d0; display: grid; grid-template-columns: 133px 1fr; background: linear-gradient(90deg, #fff 133px, #d0d0d0 133px 135px, #f3f3f3 135px); }
.zoombox span { margin: 6px 3px 6px 6px; background: #f3f3f3; display: flex; }
.zoombox b { width: 55px; background: #0078d7; color: #6b7078; font-weight: 400; letter-spacing: -1px; line-height: 31px; padding-left: 1px; }
.zoombox > i { justify-self: center; align-self: center; }
.gearbtn { position: relative; width: 38px; color: #333; }
.bar .gearbtn { color: #333; }
.gearbtn::after { content: ""; position: absolute; left: 27px; bottom: -5px; width: 10px; height: 10px; background: #777; clip-path: polygon(100% 0, 100% 100%, 0 100%); }
.property {
  height: 86px; padding-left: 379px;
  grid-template-columns: 203px 28px 50px 53px 24px 54px 53px 15px 73px 212px 16px 37px 169px 15px 29px 202px 11px 55px 23px 54px 54px 33px 22px;
}
.property .sep { height: 82px; }
.portrait { width: 22px; height: 32px; }
.pair { width: 194px; height: 66px; border: 2px solid #d0d0d0; display: grid; grid-template-rows: 32px 30px; }
.pair div { display: grid; grid-template-columns: 149px 25px 12px; align-items: center; background: linear-gradient(#d0d0d0, #d0d0d0) 142px 0/2px 100% no-repeat; }
.pair div:first-child { border-bottom: 2px solid #d0d0d0; }
.pair span, .nudge span { color: #666; padding-left: 7px; letter-spacing: -1px; }
.unit { width: 204px; height: 46px; border: 2px solid #d0d0d0; display: flex; justify-content: flex-end; align-items: center; padding-right: 6px; }
.nudge { width: 160px; height: 46px; border: 2px solid #d0d0d0; display: grid; grid-template-columns: 122px 34px; align-items: center; }
.nudge em { border-left: 2px solid #d0d0d0; height: 42px; display: flex; flex-direction: column; justify-content: center; align-items: center; gap: 17px; }
.dups { display: grid; grid-template-rows: 32px 32px; }
.dups span { display: flex; width: 24px; height: 24px; color: #b9b9b9; align-items: flex-end; }
.dups svg { width: 24px; height: 24px; }
.dups b { font: 16px/14px "Open Sans", sans-serif; margin-left: -9px; }
.toggle { width: 46px; height: 46px; background: #fff; border: 2px solid #b1b1b1; display: grid; place-items: center; color: #333; }
.bar .plus, .toolbox .plus, .tabs .plus { width: 23px; height: 23px; color: #b1b1b1; }

/* workspace */
.workspace { height: 1672px; display: grid; grid-template-columns: 60px 2390px 629px 41px; }
.toolbox { border-right: 2px solid #d7d7d7; padding: 918px 5px 0 7px; display: flex; flex-direction: column; color: #b1b1b1; }
.toolbox hr { border: 0; height: 2px; background: #d7d7d7; width: 46px; }
.toolbox .corner { width: 10px; height: 10px; background: #b1b1b1; clip-path: polygon(100% 0, 100% 100%, 0 100%); margin: 0 0 9px 34px; }
.toolbox .i32 { margin: 16px 0 15px 7px; }
.toolbox .plus { margin: 31px 0 0 12px; }
.document { display: grid; grid-template-rows: 42px 1589px 41px; }
.doctabs { background: #e9e9e9; border-bottom: 2px solid #0af; }
.page { background: #fefefe; }
.welcome { width: 508px; height: 637px; border-right: 1px solid #ddd; padding-top: 66px; }
.welcome li { height: 44px; margin-bottom: 44px; line-height: 42px; text-align: right; padding-right: 34px; font-size: 31px; color: #62a60a; }
.welcome li.gap { margin-top: 121px; }
.welcome .on { color: #000; position: relative; }
.welcome .on::after { content: ""; position: absolute; right: -4px; top: 0; width: 7px; height: 41px; background: #000; }
.welcome p { margin-top: 64px; height: 122px; background: #ededed; color: #39a84a; font-size: 24px; line-height: 76px; text-align: right; padding-right: 60px; }
.page > hr { border: 0; height: 1px; background: #e2e2e2; margin: 340px 95px 0 94px; }
.docpalette {
  border-top: 2px solid #d7d7d7;
  display: grid; align-items: center;
  grid-template-columns: 26px 31px 41px 25px 808px 1383px 32px 20px; padding-left: 4px; height: 41px;
}
.docpalette em { font: italic 23px/36px "Noto Sans CJK SC", sans-serif; color: #b1b1b1; letter-spacing: -.15px; }
.docpalette .none { width: 34px; height: 34px; }
.drop { width: 27px; height: 27px; color: #333; }
.chev { width: 16px; height: 20px; }
.dchev { width: 20px; height: 16px; color: #b1b1b1; }
.grip { width: 12px; height: 28px; background: radial-gradient(circle 1.300px at 2px 2px, #bbb 90%, transparent) 0 0/8px 8px, radial-gradient(circle 1.300px at 6px 6px, #bbb 90%, transparent) 0 0/8px 8px; }

/* docker */
.docker { display: grid; grid-template: 46px 1626px / 1fr 42px; border-left: 5px solid #fff; background: #f3f3f3; box-shadow: inset 1px 0 #e2e2e2; }
.docker > header { grid-column: 1 / 3; display: flex; align-items: center; background: #e9e9e9; border-bottom: 2px solid #b1b1b1; padding: 0 11px 0 12px; }
.docker h2 { margin-right: auto; }
.ff { width: 21px; height: 20px; margin-right: 17px; }
.xx { width: 22px; height: 20px; }
.learn { display: grid; grid-template-rows: 151px 1420px 55px; }
.hints { padding: 17px; }
.hints .row { display: flex; align-items: center; gap: 15px; margin-bottom: 24px; }
.learn article { background: #fff; margin: 0 1px; padding: 30px 16px 0 20px; font-size: 22px; }
.learn h4 { font-size: 28.500px; line-height: 36px; }
.intro { white-space: normal; font: 22px/33px "Noto Sans CJK SC", sans-serif; margin: 21px 0 15px; width: 540px; }
.learn li { height: 44px; line-height: 44px; display: flex; align-items: center; }
.learn li::before { content: ""; width: 5px; height: 5px; border-radius: 50%; background: #000; margin: 0 13px 0 2px; }
.learn a { color: #39f; }
.more { border: solid #bcbcbc; border-width: 2px 0; margin-top: 25px; height: 210px; padding-top: 24px; }
.topic { display: flex; padding: 25px 0 0 15px; gap: 67px; }
.topic svg { width: 38px; height: 38px; margin-top: 4px; }
.topic strong { display: block; font-weight: 400; font-size: 26.700px; line-height: 38px; margin-top: 3px; }
.topic a { display: block; line-height: 36px; }
.voice { text-align: center; font-weight: 700; margin-top: 41px; padding-right: 4px; }
.share { text-align: center; font-style: italic; margin-top: 26px; font-size: 22.500px; text-spacing-trim: space-all; }
.learn footer { display: flex; align-items: center; padding: 7px 8px 0; color: #b9b9b9; gap: 22px; }
.learn footer .dark { margin-right: auto; }
.tabs { background: #e9e9e9; border-left: 2px solid #b1b1b1; }
.tabs span { display: flex; align-items: center; writing-mode: vertical-rl; text-orientation: sideways; width: 40px; height: 142px; margin-top: 2px; background: #d7d7d7; padding-top: 8px; gap: 14px; font-size: 22.500px; color: #000; }
.tabs span svg { width: 30px; height: 30px; color: #333; }
.tabs .sel { background: #b1b1b1; margin: 0 0 0 -2px; width: 42px; height: 140px; }
.tabs .obj { height: 186px; margin-top: 1px; padding-top: 10px; }
.tabs .plus { margin: 11px 0 0 8px; }

/* color palette */
.palette { border-left: 2px solid #d7d7d7; display: grid; justify-items: center; align-items: center; align-content: start; grid-template-rows: 18px 32px 48px 29px 1464px 34px 34px; }
.palette .grip.wide { width: 28px; height: 12px; }
.palette > .drop { width: 25px; height: 25px; color: #b9b9b9; }
.palette > .up, .palette > .down { width: 20px; height: 14px; }
.swatches { width: 34px; height: 1464px; overflow: hidden; border: 1px solid #666; border-bottom: 0; align-self: start; }
.swatches i { display: block; height: 33px; border-top: 1px solid #666; }
.swatches svg { width: 32px; height: 32px; }

/* status bar */
.status {
  height: 72px; border-top: 2px solid #d7d7d7; background: #f3f3f3;
  display: grid; align-items: center; padding-left: 20px;
  grid-template-columns: 47px 264px 1828px 36px 49px 324px 25px 49px 408px 18px 32px;
}
.status > span { padding-bottom: 3px; }
.status > svg, .gearbtn { margin-bottom: 2px; }
.nofill { width: 42px; height: 42px; border: 2px solid #b1b1b1; background: linear-gradient(to bottom right, #fff 48%, #d00 48.500% 51.500%, #fff 52%); margin-bottom: 2px; }
.status .pen { width: 18px; height: 32px; }

/* taskbar */
.taskbar {
  height: 96px; padding: 0 0 0 46px;
  display: grid; align-items: center;
  grid-template-columns: 57px 813px 75px 462px 88px 88px 89px 88px 87px 90px 85px 75px 426px 61px 67px 63px 62px 48px 48px 66px 96px;
  background: linear-gradient(55deg, #dff1fb 0, #deeffa 12.500%, #d3f2f8 14%, #f3ebc4 15.500%, #f5e6cb 18%, #f5e6cb 21.500%, #efe6c8 23.500%, #dcdaea 25.500%, #dadaeb 33%, #d5e0f2 37%, #d9dbec 44%, #d5dff1 53%, #d6def0 60%, #d2dcea 62.500%, #efe3d0 64.500%, #ecdfd8 68%, #e3d9e8 71%, #d9dcee 75%, #d6deef 79.500%, #cfe6ef 81.500%, #f6ebc4 84.500%, #f9e9c7 87%, #f5e3d0 89.500%, #d9dcee 91.500%, #d6daef 100%);
  box-shadow: inset 0 2px rgba(120, 140, 170, .18);
}
.torch { width: 36px; height: 48px; }
.news { display: flex; flex-direction: column; line-height: 32px; padding-top: 2px; font-size: 23.500px; }
.news b { font-weight: 400; }
.news span { color: #555c62; }
.search { width: 436px; height: 63px; margin-top: -1px; border-radius: 32px; background: #f4f6fb; border: 2px solid #c9d0e2; border-bottom: 3px solid #b4bccf; display: flex; align-items: center; padding: 0 13px 0 20px; }
.search svg { width: 30px; height: 30px; margin-right: 20px; }
.search span { font-size: 27.500px; color: #555; margin-right: auto; }
.search .trees { width: 92px; height: 54px; margin: 3px 0 0; }
.app { position: relative; display: grid; place-items: center; width: 48px; }
.app.run::after, .app.tile::after { content: ""; position: absolute; bottom: -14px; width: 12px; height: 6px; border-radius: 3px; background: #777e88; }
.app.warm::after { background: #8a8377; }
.app.tile { width: 76px; height: 77px; border-radius: 8px; background: rgba(255, 255, 255, .55); border-bottom: 2px solid #d0c6cf; }
.app.tile::after { bottom: -2px; width: 32px; background: #0078d4; }
.caret { width: 26px; height: 14px; }
.slid { width: 27px; height: 24px; }
.ime { font-size: 27px; }
.clock { display: flex; flex-direction: column; text-align: right; line-height: 32px; font-size: 22.500px; letter-spacing: -.8px; color: #111; }

/* file menu */
.filemenu {
  position: absolute; left: 2px; top: 94px; width: 402px; height: 1068px; padding-top: 4px;
  border: 2px solid #b8b8b8; border-radius: 3px 10px 10px 10px;
  background: linear-gradient(90deg, #f3f3f3 48px, #fff 48px);
  box-shadow: 0 16px 32px rgba(0, 0, 0, .16);
}
.filemenu li { display: grid; grid-template-columns: 53px 1fr auto; align-items: center; height: 42px; padding: 0 46px 0 7px; letter-spacing: -.2px; }
.filemenu svg { width: 32px; height: 32px; color: #333; }
.filemenu .off svg { color: #b9b9b9; }
.filemenu kbd { letter-spacing: -.4px; }
.filemenu .sub { position: relative; }
.filemenu .sub::after { content: ""; position: absolute; left: 374px; width: 8px; height: 16px; background: #777; clip-path: polygon(0 0, 100% 50%, 0 100%); }
.filemenu .off.sub::after { background: #cfcfcf; }
.filemenu .line { height: 2px; margin: 2px 4px 3px 52px; background: #d7d7d7; }

/* element annotations */
.mark { position: absolute; border: 3px solid #0f0; }
.mark b { position: absolute; left: 0; font: 700 25px/25px "Liberation Sans", sans-serif; color: #0f0; }
.root { left: 0; top: 89px; width: 420px; height: 1083px; border-color: #f00; }
.m1 { left: 2px; top: 95px; width: 48px; height: 47px; }
.m2 { left: 3px; top: 141px; width: 47px; height: 43px; }
.m3 { left: 2px; top: 182px; width: 47px; height: 46px; }
.m4 { left: 2px; top: 226px; width: 48px; height: 43px; }
.m5 { left: 2px; top: 354px; width: 48px; height: 49px; }
.m6 { left: 0; top: 1033px; width: 412px; height: 137px; }
.root b { top: -22px; }
.m1 b, .m5 b { top: -22px; left: -1px; }
.m2 b, .m4 b { top: -26px; left: -1px; }
.m3 b { top: -24px; left: -1px; }
.m6 b { top: -23px; left: -3px; }
```
